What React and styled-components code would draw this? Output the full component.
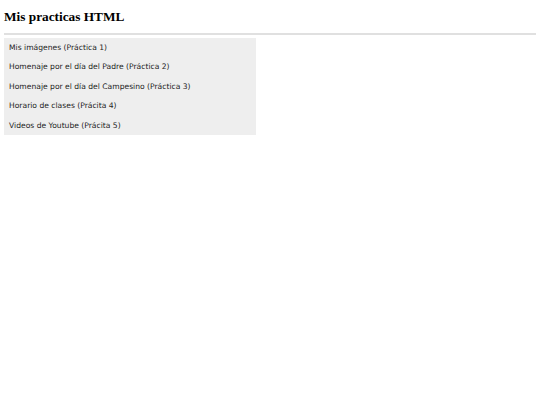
import React from "react";
import styled, { createGlobalStyle } from "styled-components";

const Global = createGlobalStyle`
  html, body { margin: 0; padding: 0; background: #fff; }
`;

const Page = styled.div`
  padding: 0 4px;
`;

const Title = styled.h1`
  font-family: "Liberation Serif", "Times New Roman", serif;
  font-weight: bold;
  font-size: 13.3px;
  line-height: 16px;
  margin: 0;
  padding: 9px 0 7px 0;
  color: #000;
`;

const Rule = styled.div`
  height: 2px;
  background: #e0e0e0;
  margin: 1px 0 3px 0;
`;

const Menu = styled.ul`
  list-style: none;
  margin: 0;
  padding: 0;
  width: 252px;
  background: #eeeeee;
`;

const Item = styled.li`
  font-family: "DejaVu Sans", Verdana, sans-serif;
  font-size: 7.6px;
  line-height: 19.4px;
  padding-left: 5px;
  color: #222;
`;

const items = [
  "Mis imágenes (Práctica 1)",
  "Homenaje por el día del Padre (Práctica 2)",
  "Homenaje por el día del Campesino (Práctica 3)",
  "Horario de clases (Prácita 4)",
  "Videos de Youtube (Prácita 5)",
];

export default function App() {
  return (
    <Page>
      <Global />
      <Title>Mis practicas HTML</Title>
      <Rule />
      <Menu>
        {items.map((t) => (
          <Item key={t}>{t}</Item>
        ))}
      </Menu>
    </Page>
  );
}
